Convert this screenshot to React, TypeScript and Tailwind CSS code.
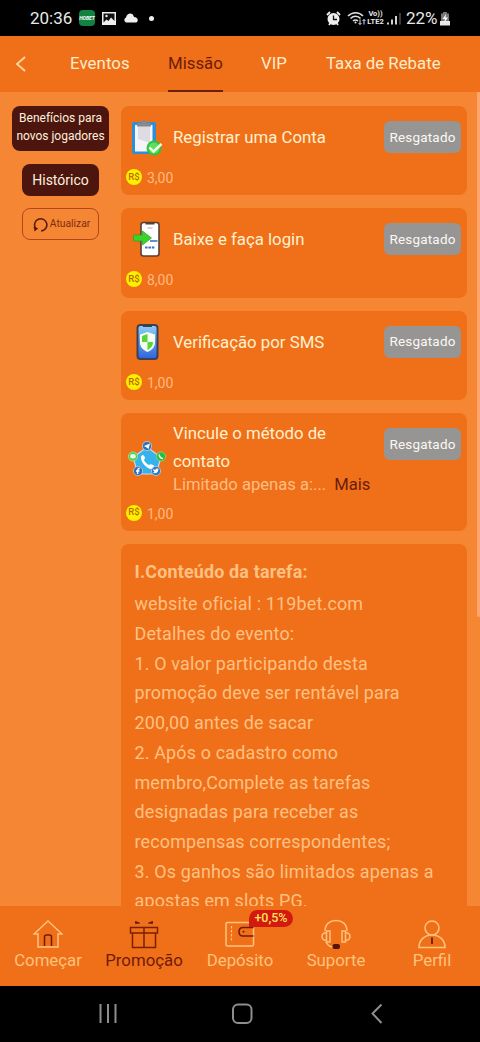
import type {ReactNode} from "react";

interface Mission {
  id: number;
  title: string;
  reward: string;
  icon: ReactNode;
  note?: string;
}

const ClipboardIcon = () => (
  <svg width="40" height="40" viewBox="0 0 40 40">
    <rect x="5" y="5" width="24" height="32" rx="2" fill="#2f8fd6" />
    <rect x="8" y="8" width="17.500" height="26.500" fill="#f4f4fa" />
    <path d="M11 8h12v18l-12-4z" fill="#dcdce2" />
    <path d="M10 9.500V6h4c0-4 6-4 6 0h4v3.500z" fill="#858a8c" />
    <circle cx="27" cy="31" r="7.500" fill="#2fc43c" />
    <circle cx="27" cy="31" r="5.500" fill="#62dc62" />
    <path d="M22.500 30.500l4 4 8-7.500" fill="none" stroke="#e9ffe6" strokeWidth="2.400" />
  </svg>
);

const LoginIcon = () => (
  <svg width="40" height="40" viewBox="0 0 40 40">
    <rect x="14" y="3.500" width="18" height="33.500" rx="2.500" fill="#fff" stroke="#5a3f33" strokeWidth="1.600" />
    <path d="M18.500 3h9v2.500h-9z" fill="#5a3f33" />
    <path d="M20.500 9h5" stroke="#aaa" />
    <path d="M23 22h7.500" stroke="#3568b8" strokeWidth="1.500" />
    <path d="M18 28.500h10" stroke="#4a6cc0" strokeWidth="2.200" strokeDasharray="2.600 0.800" />
    <path d="M6.500 16h9v-4l9 7-9 7v-4h-9z" fill="#3bd32b" stroke="#2aa51d" strokeWidth=".7" />
  </svg>
);

const SmsIcon = () => (
  <svg width="40" height="40" viewBox="0 0 40 40">
    <defs>
      <linearGradient id="screen" x1="0" y1="0" x2="0" y2="1">
        <stop offset="0" stopColor="#8fd0f5" />
        <stop offset="1" stopColor="#2d63dd" />
      </linearGradient>
    </defs>
    <rect x="10.500" y="3" width="20" height="34" rx="3" fill="url(#screen)" stroke="#3c3f55" strokeWidth="2" />
    <path d="M16 2.500h9V5h-9z" fill="#3c3f55" />
    <path d="M20.500 10l7.500 2.500v8c0 5-3.500 7.500-7.500 9.500-4-2-7.500-4.500-7.500-9.500v-8z" fill="#f2fff0" />
    <path d="M20.500 12v8H15v-6zM20.500 20H26c0 4-2.500 6.500-5.500 8z" fill="#5bd43b" />
  </svg>
);

const ContactIcon = () => (
  <svg width="40" height="40" viewBox="0 0 40 40">
    <path d="M20 7L34 17.500 29 34H11L6 17.500z" fill="#35b3ea" stroke="#c9dbe6" strokeWidth="1.200" />
    <path d="M14 16.500c1-2 2.500-2 3.500 0s0 2.500-.5 3.500c1 2.500 3 4 5 5 1-1 2-1 4 0s1 2.500 0 3.500c-4 2.500-13-6-12-12z" fill="#fff" />
    <circle cx="20" cy="6" r="4.600" fill="#3272b8" stroke="#bfd3e2" strokeWidth=".8" />
    <path d="M17 6l6-2.500-1.500 5.500-2-1.500z" fill="#fff" />
    <circle cx="34" cy="16.500" r="4.600" fill="#2cbe39" stroke="#8bd78c" strokeWidth=".8" />
    <path d="M32 14.500c.5 2.500 2 4 4 4" stroke="#eaffea" strokeWidth="1.400" fill="none" />
    <circle cx="6" cy="16.500" r="4.600" fill="#54cf54" stroke="#a8dfa0" strokeWidth=".8" />
    <ellipse cx="6" cy="16.300" rx="2.800" ry="2.200" fill="#e7ffe7" />
    <circle cx="11" cy="31" r="4.600" fill="#2f6fbd" stroke="#b5cde0" strokeWidth=".8" />
    <path d="M12.800 28.500c-2-.3-2.200.5-2.200 5.500M9 31h3.400" stroke="#fff" strokeWidth="1.400" fill="none" />
    <circle cx="29" cy="31" r="4.600" fill="#3179bf" stroke="#b5cde0" strokeWidth=".8" />
    <path d="M26 32.800c3 1.400 5.500-.5 5.500-4l-2.200-.3-1 1.500-2-1c0 1.500.3 2 1.200 2.800z" fill="#fff" />
  </svg>
);

const missions: Mission[] = [
  {id: 1, title: "Registrar uma Conta", reward: "3,00", icon: <ClipboardIcon />},
  {id: 2, title: "Baixe e faça login", reward: "8,00", icon: <LoginIcon />},
  {id: 3, title: "Verificação por SMS", reward: "1,00", icon: <SmsIcon />},
  {id: 4, title: "Vincule o método de contato", reward: "1,00", icon: <ContactIcon />, note: "Limitado apenas a:..."},
];

const details = [
  "website oficial : 119bet.com",
  "Detalhes do evento:",
  "1. O valor participando desta",
  "promoção deve ser rentável para",
  "200,00 antes de sacar",
  "2. Após o cadastro como",
  "membro,Complete as tarefas",
  "designadas para receber as",
  "recompensas correspondentes;",
  "3. Os ganhos são limitados apenas a",
  "apostas em slots PG.",
];

export default function App() {
  return (
    <div className="flex h-[1042px] w-[480px] flex-col overflow-hidden bg-black font-[Roboto,sans-serif]">
      <StatusBar />
      <header className="flex h-[56.5px] shrink-0 items-center bg-[#f07019] text-[16.8px] text-[#ffeccb]">
        <svg className="ml-3.5 shrink-0" width="13" height="18" viewBox="0 0 13 18" fill="none" stroke="#ffd6a0" strokeWidth="1.8">
          <path d="M11 2L3 9l8 7" />
        </svg>
        <span className="ml-[43px] w-[60px] whitespace-nowrap tracking-[0.1px]">Eventos</span>
        <span className="relative ml-[38px] flex h-full w-[55px] items-center whitespace-nowrap text-[#6f1a08]">
          Missão
          <span className="absolute bottom-0 left-0 h-0.5 w-full bg-[#701e0c]" />
        </span>
        <span className="ml-[38px] w-[27px]">VIP</span>
        <span className="ml-[38px] whitespace-nowrap">Taxa de Rebate</span>
      </header>

      <main className="flex h-[814px] shrink-0 overflow-hidden bg-[#f58634]">
        <aside className="flex w-[121px] shrink-0 flex-col items-center pt-3.5">
          <button className="h-[45px] w-[97px] whitespace-nowrap rounded-lg bg-[#4c160e] pb-1 text-[12px] leading-[18px] text-[#fff0de]">
            Benefícios para
            <br />
            novos jogadores
          </button>
          <button className="mt-[13px] h-8 w-[77px] rounded-lg bg-[#4c160e] text-[14px] text-[#fff0de]">Histórico</button>
          <button className="mt-3 flex h-8 w-[77px] items-center justify-center gap-[2px] rounded-lg border border-[#b5461a] pl-0.5 text-[10.300px] text-[#7c2c10]">
            <svg className="shrink-0" width="15" height="15" viewBox="0 0 14 14" fill="none" stroke="#5c1b0c" strokeWidth="1.5">
              <path d="M2.500 10.500A5.700 5.700 0 1 1 7.500 13" />
              <path d="M.5 9l4.500 1.500-3.500 3z" fill="#5c1b0c" stroke="none" />
            </svg>
            Atualizar
          </button>
        </aside>

        <section className="flex w-[346px] shrink-0 flex-col gap-[13px] pt-3.5">
          {missions.map(mission => (
            <MissionCard key={mission.id} mission={mission} />
          ))}
          <div className="h-[380px] shrink-0 rounded-lg bg-[#f07019] pl-[13.500px] pt-[13px] text-[17.9px] leading-[29.7px] tracking-[0.18px] text-[#ffc183]">
            <h2 className="mb-[3px] font-bold">I.Conteúdo da tarefa:</h2>
            {details.map(line => (
              <p key={line} className="whitespace-nowrap">{line}</p>
            ))}
          </div>
        </section>
        <div className="ml-auto h-[525px] w-[3px] rounded-b-sm bg-[#ffa56b]" />
      </main>

      <TabBar />

      <div className="flex h-14 shrink-0 items-center">
        <svg width="480" height="56" viewBox="0 0 480 56" fill="none" stroke="#8e8e8e" strokeWidth="2">
          <path d="M100.500 18v19M108 18v19M115.500 18v19" />
          <rect x="233" y="18.500" width="18.500" height="18.500" rx="5" />
          <path d="M381.500 18.500l-9 9 9 9.500" />
        </svg>
      </div>
    </div>
  );
}

const MissionCard = ({mission}: {mission: Mission}) => {
  return (
    <div className="shrink-0 rounded-lg bg-[#f07019] pb-[7.6px] pt-[11px]">
      <div className="flex">
        <div className={mission.note ? "ml-1.5 flex w-[46px] shrink-0 items-center pt-1" : "ml-1.5 flex w-[46px] shrink-0 items-center"}>
          {mission.icon}
        </div>
        <div className="flex w-[200px] flex-col justify-center text-[16.8px] leading-7 text-[#fff0cf]">
          <h3 className={mission.note ? "-mt-[5px] w-[170px]" : "whitespace-nowrap"}>{mission.title}</h3>
          {mission.note && (
            <p className="-mb-[3.5px] -mt-[3px] flex gap-2 whitespace-nowrap pt-px text-[16.600px] leading-[23px] text-[#ffbd82]">
              {mission.note}
              <span className="text-[#6b1c09]">Mais</span>
            </p>
          )}
        </div>
        <span className="ml-[11px] mt-1 flex h-8 w-[77px] shrink-0 items-center justify-center rounded-md bg-[#979593] text-[13.500px] tracking-[0.2px] text-[#fbf8f4]">
          Resgatado
        </span>
      </div>
      <div className="mt-[10.7px] flex h-5 items-center gap-[5px] pl-[5px] text-[14px] text-[#ffb982]">
        <span className="-mt-px flex size-4 items-center justify-center rounded-full bg-[#fff000] text-[9.5px] font-medium text-[#b96a00]">R$</span>
        <span className="pt-0.5">{mission.reward}</span>
      </div>
    </div>
  );
};

const StatusBar = () => (
  <div className="flex h-[35.5px] shrink-0 items-center bg-black pt-px text-[17px] text-[#e8e8e8]">
    <span className="ml-[30px] w-[43px] whitespace-nowrap">20:36</span>
    <span className="ml-1.5 flex size-4 items-center justify-center rounded-sm bg-[#128243] text-[5px] font-bold italic text-white">HOBET</span>
    <svg className="ml-[7px]" width="14" height="13" viewBox="0 0 14 13">
      <path d="M0 0h14v13H0z" fill="#eee" />
      <path d="M1.500 1.500h11V9L9 5.500 6.500 9l-2-1.500-3 3z" fill="#111" />
      <circle cx="4.500" cy="4" r="1.200" fill="#eee" />
    </svg>
    <svg className="ml-[7px]" width="15" height="10" viewBox="0 0 15 10">
      <path d="M3 9.500a2.700 2.700 0 0 1 0-5C4-.5 10-1 11 4c4 0 5 4.500 2 5.500z" fill="#eee" />
    </svg>
    <span className="ml-[11px] size-[5px] rounded-full bg-[#eee]" />
    <svg className="ml-[172px]" width="15" height="15" viewBox="0 0 15 15">
      <circle cx="7.500" cy="8" r="6" fill="#eee" />
      <path d="M1 4l3-3M14 4l-3-3M3 14l1-1.500M12 14l-1-1.500" stroke="#eee" strokeWidth="1.800" />
      <path d="M7.500 4.500v4H11" stroke="#111" strokeWidth="1.300" fill="none" />
    </svg>
    <svg className="ml-[6px]" width="19" height="16" viewBox="0 0 19 16" fill="none" stroke="#e0e0e0" strokeWidth="1.500">
      <path d="M1 6c4.500-4.500 11-4.500 15 0M3.500 8.500c3-3 7.500-3 10 0M6 11c1.500-1.500 3.500-1.500 5 0" />
      <circle cx="8.500" cy="12.500" r="1" fill="#eee" stroke="none" />
      <path d="M13 9.500v5M11.500 13l1.500 1.500 1.500-1.500M17 14.500v-5M15.500 11L17 9.500l1.500 1.500" strokeWidth="1" />
    </svg>
    <span className="flex w-[19px] flex-col items-center text-[7.5px] font-bold leading-[8px]">
      <span>Vo))</span>
      <span>LTE2</span>
    </span>
    <svg className="ml-0.5" width="14" height="14" viewBox="0 0 14 14">
      <path d="M1 13.500v-2M5 13.500v-5M9 13.500V5" stroke="#e8e8e8" strokeWidth="1.800" />
      <path d="M13 13.500V2" stroke="#555" strokeWidth="1.400" />
    </svg>
    <span className="ml-[5px] w-[33px]">22%</span>
    <svg className="ml-px" width="10" height="15" viewBox="0 0 10 15">
      <path d="M1 2.500h2V1h4v1.500h2V10H1z" fill="#777" />
      <path d="M0 10h10v4.500H0z" fill="#e8e8e8" />
      <path d="M6 3L2.500 8H5l-1 4 4-5.500H5.500z" fill="#fff" />
    </svg>
  </div>
);

const tabs = [
  {
    label: "Começar",
    icon: (
      <>
        <path d="M1 15L15 2l14 13h-4v13H5V15z" stroke="#ffc27d" />
        <path d="M11.500 27v-9q0-2 2-2h3q2 0 2 2v9" stroke="#701b08" />
      </>
    ),
  },
  {
    label: "Promoção",
    icon: (
      <>
        <path d="M1.500 8.500h27V14h-27zM3.500 14v14.500h23V14M15 8.500v20" stroke="#7a1e08" />
        <path d="M6.500 2.500l4 1.500-4 .5zM23.500 2.500L19.500 4l4 .5z" fill="#701b08" stroke="#701b08" strokeWidth="1" />
      </>
    ),
  },
  {
    label: "Depósito",
    icon: (
      <>
        <rect x="1" y="3.500" width="27.500" height="23.500" rx="1.500" stroke="#ffc27d" />
        <path d="M6.500 7v16" stroke="#ffc27d" strokeWidth="1.200" strokeDasharray="2.500 1.500" />
        <path d="M28.500 8.500H18q-4 0-4 4.300t4 4.200h10.500" stroke="#701b08" />
        <circle cx="18.500" cy="12.800" r="1" fill="#701b08" stroke="none" />
      </>
    ),
  },
  {
    label: "Suporte",
    icon: (
      <>
        <path d="M4 12C4 5 9 1.500 15 1.500S26 5 26 12M5 23q2 4.500 6.500 5" stroke="#ffc27d" />
        <path d="M5.500 12h3.500v11H5.500zM24.500 12H21v11h3.500zM5.500 13.500q-4.500.5-4.500 4t4.500 4M24.500 13.500q4.500.5 4.500 4t-4.500 4" stroke="#ffc27d" />
        <rect x="11.500" y="25" width="7.500" height="5" rx="2" fill="#541406" stroke="none" />
      </>
    ),
  },
  {
    label: "Perfil",
    icon: (
      <>
        <circle cx="15" cy="9" r="7" stroke="#ffc27d" />
        <path d="M2 28.500c0-7 5-12.500 13-12.500s13 5.500 13 12.500z" stroke="#ffc27d" />
        <path d="M15 18.500V25" stroke="#701b08" strokeWidth="1.800" />
      </>
    ),
  },
];

const TabBar = () => (
  <nav className="grid h-20 shrink-0 grid-cols-5 bg-[#f07019] pt-[13px] text-[16.8px] text-[#ffc27d]">
    {tabs.map(tab => (
      <div key={tab.label} className="relative flex flex-col items-center">
        <svg width="30" height="30" viewBox="0 0 30 30" fill="none" strokeWidth="1.500">
          {tab.icon}
        </svg>
        <span className={tab.label === "Promoção" ? "leading-[23px] text-[#701b08]" : "leading-[23px]"}>{tab.label}</span>
        {tab.label === "Depósito" && (
          <span className="absolute -top-[9px] left-[57px] flex h-[17px] w-11 items-center justify-center rounded-full rounded-bl-none bg-[#d21a11] text-[12.5px] font-medium text-[#ffe35a]">
            +0,5%
          </span>
        )}
      </div>
    ))}
  </nav>
);
